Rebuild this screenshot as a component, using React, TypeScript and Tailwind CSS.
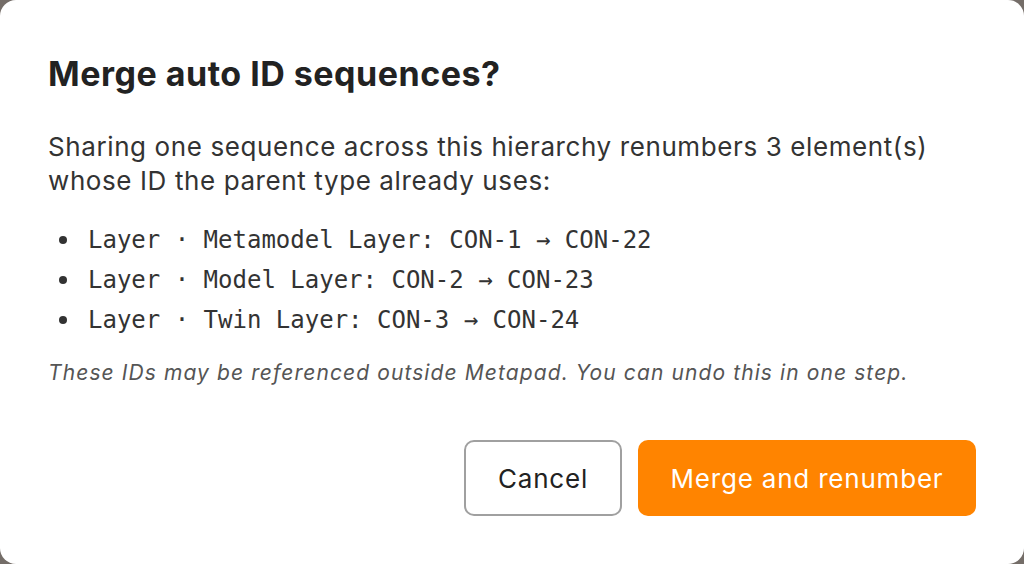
import { FC } from 'react';

const items = [
  { label: 'Metamodel Layer', from: 'CON-1', to: 'CON-22' },
  { label: 'Model Layer', from: 'CON-2', to: 'CON-23' },
  { label: 'Twin Layer', from: 'CON-3', to: 'CON-24' },
];

const App: FC = () => (
  <div className="h-[564px] w-[1024px] bg-[#746d68] font-['Inter',sans-serif]">
    <div className="flex h-full flex-col rounded-[16px] bg-white px-12 pt-[54px] pb-12">
      <h2 className="text-[34px] font-bold leading-10 tracking-[0.5px] text-[#222]">Merge auto ID sequences?</h2>

      <p className="mt-9 text-[26px] leading-[34px] tracking-[0.6px] text-[#333]">
        Sharing one sequence across this hierarchy renumbers 3 element(s) whose ID the parent type already uses:
      </p>

      <ul className="mt-[22px] flex flex-col font-['DejaVu_Sans_Mono',monospace] text-[24px] leading-10 text-[#333]">
        {items.map((it) => (
          <li key={it.label} className="flex items-center">
            <span className="ml-[11px] h-[8px] w-[8px] rounded-full bg-[#333]" />
            <span className="ml-[21px]">
              Layer · {it.label}: {it.from} → {it.to}
            </span>
          </li>
        ))}
      </ul>

      <p className="mt-[19px] text-[21px] italic leading-7 tracking-[1.1px] text-[#555]">
        These IDs may be referenced outside Metapad. You can undo this in one step.
      </p>

      <div className="mt-auto flex justify-end gap-4">
        <button className="h-[76px] w-[158px] rounded-[10px] border-2 border-[#a0a0a0] bg-white text-[26px] tracking-[0.8px] text-[#222]">
          Cancel
        </button>
        <button className="h-[76px] w-[338px] rounded-[10px] bg-[#ff8400] text-[26px] tracking-[0.8px] text-white">
          Merge and renumber
        </button>
      </div>
    </div>
  </div>
);

export default App;
